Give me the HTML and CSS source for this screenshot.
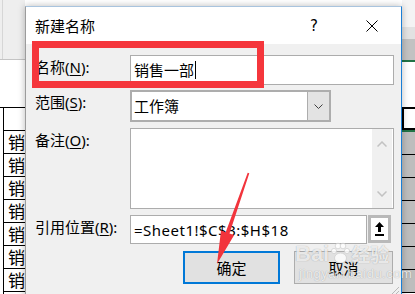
FILE: index.html
```html
<!DOCTYPE html>
<html lang="zh-CN">
<head>
  <meta charset="UTF-8" />
  <meta name="viewport" content="width=device-width, initial-scale=1.0"/>
  <title>新建名称</title>
  <link rel="stylesheet" href="styles.css">
</head>
<body>

  <!-- Sheet behind the dialog -->
  <div class="sheet">
    <div class="sheet-left">
      <div class="ribbon"><div class="ribbon-line"></div></div>
      <div class="blank"></div>
      <div class="cells">
        <div class="cell"></div>
        <div class="cell">销</div>
        <div class="cell">销</div>
        <div class="cell">销</div>
        <div class="cell">销</div>
        <div class="cell">销</div>
        <div class="cell">销</div>
        <div class="cell">销</div>
        <div class="cell">销</div>
      </div>
    </div>
    <div class="sheet-right">
      <div class="shade"></div>
      <div class="head-light"></div>
      <div class="head-dark"></div>
      <div class="green"></div>
      <div class="blank-r"></div>
      <div class="selected"></div>
      <div class="green"></div>
      <div class="gray-cells">
        <div class="gray-cell"></div>
        <div class="gray-cell"></div>
        <div class="gray-cell"></div>
        <div class="gray-cell"></div>
        <div class="gray-cell"></div>
        <div class="gray-cell"></div>
        <div class="gray-cell"></div>
      </div>
    </div>
  </div>

  <!-- Dialog -->
  <div class="dialog">
    <div class="titlebar">
      <span class="title">新建名称</span>
      <span class="help">?</span>
      <svg class="close" width="12" height="12" viewBox="0 0 12 12">
        <path d="M0.5 0.5 L11.5 11.5 M11.5 0.5 L0.5 11.5" stroke="#000" stroke-width="1" fill="none"/>
      </svg>
    </div>

    <div class="body">
      <div class="field">
        <label>名称(<u>N</u>):</label>
        <div class="input name-input">销售一部<span class="caret"></span></div>
      </div>

      <div class="field scope">
        <label>范围(<u>S</u>):</label>
        <div class="combo">
          <div class="combo-text">工作簿</div>
          <div class="combo-btn">
            <svg width="9" height="5" viewBox="0 0 9 5">
              <path d="M0.5 0.5 L4.5 4.5 L8.5 0.5" stroke="#404040" stroke-width="1" fill="none"/>
            </svg>
          </div>
        </div>
      </div>

      <div class="field comment">
        <label>备注(<u>O</u>):</label>
        <div class="textarea">
          <div class="scrollbar">
            <svg width="10" height="6" viewBox="0 0 10 6">
              <path d="M0.5 5.5 L5 1 L9.5 5.5" stroke="#c2c2c2" stroke-width="1.5" fill="none"/>
            </svg>
            <svg width="10" height="6" viewBox="0 0 10 6">
              <path d="M0.5 0.5 L5 5 L9.5 0.5" stroke="#c2c2c2" stroke-width="1.5" fill="none"/>
            </svg>
          </div>
        </div>
      </div>

      <div class="field ref">
        <label>引用位置(<u>R</u>):</label>
        <div class="ref-box">
          <div class="input ref-input">=Sheet1!$C$3:$H$18</div>
          <div class="collapse-btn">
            <svg width="9" height="14" viewBox="0 0 9 14">
              <path d="M4.5 0 L9 5 L6 5 L6 10 L3 10 L3 5 L0 5 Z" fill="#000"/>
              <rect x="0" y="12" width="9" height="2" fill="#000"/>
            </svg>
          </div>
        </div>
      </div>

      <div class="actions">
        <button class="btn primary">确定</button>
        <button class="btn">取消</button>
      </div>
    </div>

    <div class="grip"></div>
  </div>

  <!-- Annotations on top of the screenshot -->
  <div class="highlight"></div>
  <svg class="arrow" width="415" height="294" viewBox="0 0 415 294">
    <polygon points="217,264 221,230.5 225.7,232.2 247.7,172.7 249.3,173.3 229.5,233.4 234.2,235" fill="#f2343c"/>
  </svg>

  <div class="watermark">
    <div class="wm-top">
      <span class="wm-bai">Bai</span>
      <svg class="wm-paw" width="20" height="24" viewBox="0 0 20 24">
        <circle cx="4" cy="9" r="2.6" fill="#fff" stroke="#ccc" stroke-width="0.8"/>
        <circle cx="8" cy="4" r="2.8" fill="#fff" stroke="#ccc" stroke-width="0.8"/>
        <circle cx="13" cy="4" r="2.8" fill="#fff" stroke="#ccc" stroke-width="0.8"/>
        <circle cx="17" cy="9" r="2.6" fill="#fff" stroke="#ccc" stroke-width="0.8"/>
        <ellipse cx="10.5" cy="16" rx="6" ry="5" fill="#fff" stroke="#ccc" stroke-width="0.8"/>
      </svg>
      <span class="wm-du">经验</span>
    </div>
    <div class="wm-url">jingyan.baidu.com</div>
  </div>

</body>
</html>
```

FILE: styles.css
```css
body {
  margin: 0;
  width: 415px;
  height: 294px;
  overflow: hidden;
  position: relative;
  background: #fff;
  font-family: "Noto Sans", "Noto Sans CJK SC", sans-serif;
  font-size: 15px;
  color: #000;
}

/* ---------- sheet behind ---------- */

.sheet {
  display: flex;
  justify-content: space-between;
  height: 294px;
}

.sheet-left {
  width: 25px;
}

.ribbon {
  height: 60px;
  background: #eeeeee;
  border-bottom: 1px solid #c4c4c4;
  box-sizing: border-box;
}

.ribbon-line {
  height: 100%;
  margin-left: 2px;
  border-left: 1px solid #d6d6d6;
}

.blank {
  height: 47px;
}

.cells {
  border-top: 1px solid #000;
}

.cell {
  height: 22px;
  margin-left: 3px;
  padding-left: 4px;
  border-left: 1px solid #000;
  border-bottom: 1px solid #000;
  font-family: "Noto Sans CJK SC", sans-serif;
  font-size: 17px;
  line-height: 22px;
  white-space: nowrap;
  overflow: hidden;
}

.sheet-right {
  width: 13px;
}

.shade {
  height: 27px;
  background: #f4f4f4;
}

.head-light {
  height: 12px;
  background: #e2e2e2;
}

.head-dark {
  height: 21px;
  background: #c2c2c2;
}

.green {
  height: 2px;
  background: #217346;
}

.blank-r {
  height: 45px;
}

.selected {
  height: 19px;
  border: 2px solid #000;
  border-right: none;
}

.gray-cells {
  background: #bdbdbd;
}

.gray-cell {
  height: 22px;
  border-bottom: 1px solid #000;
}

/* ---------- dialog ---------- */

.dialog {
  position: absolute;
  left: 25px;
  top: 6px;
  width: 377px;
  height: 300px;
  box-sizing: border-box;
  border: 1px solid #9c9c9c;
  border-top-color: #a9c4de;
  border-right-color: #1a7fd6;
  background: #f0f0f0;
  box-shadow: 0 0 7px rgba(0, 0, 0, 0.28);
}

.titlebar {
  height: 37px;
  background: #fff;
  display: flex;
  align-items: center;
  padding-left: 9px;
}

.title {
  flex: 1;
  font-family: "Noto Sans CJK SC", sans-serif;
  line-height: 20px;
}

.help {
  font-family: "DejaVu Sans", sans-serif;
  font-size: 15px;
  width: 12px;
  margin-right: 46px;
  text-align: center;
}

.close {
  margin-right: 23px;
}

.body {
  padding: 11px 7px 0 9px;
}

.field {
  display: flex;
  align-items: flex-start;
  margin-bottom: 5px;
}

.field label {
  width: 95px;
  flex: none;
  line-height: 24px;
  white-space: nowrap;
}

.field u {
  text-decoration-thickness: 1px;
  text-underline-offset: 2px;
}

.input {
  flex: 1;
  height: 30px;
  box-sizing: border-box;
  border: 1px solid #acacac;
  background: #fff;
  padding-left: 3px;
  line-height: 28px;
  white-space: nowrap;
  overflow: hidden;
}

.name-input {
  display: flex;
  align-items: center;
}

.caret {
  display: inline-block;
  width: 1px;
  height: 18px;
  background: #000;
  margin-left: 1px;
}

.scope {
  margin-bottom: 6px;
}

.combo {
  width: 201px;
  height: 32px;
  box-sizing: border-box;
  border: 2px solid #adadad;
  background: #fff;
  display: flex;
}

.combo-text {
  flex: 1;
  padding-left: 2px;
  line-height: 28px;
}

.combo-btn {
  width: 21px;
  background: #e3e3e3;
  border-left: 1px solid #adadad;
  display: flex;
  align-items: center;
  justify-content: center;
}

.comment {
  margin-bottom: 6px;
}

.textarea {
  flex: 1;
  height: 81px;
  box-sizing: border-box;
  border: 1px solid #acacac;
  background: #fff;
  display: flex;
  justify-content: flex-end;
  padding-right: 1px;
}

.scrollbar {
  width: 20px;
  background: #f0f0f0;
  display: flex;
  flex-direction: column;
  justify-content: space-between;
  align-items: center;
  padding: 12px 0 11px;
}

.ref {
  margin-bottom: 7px;
}

.ref-box {
  flex: 1;
  display: flex;
  gap: 1px;
  padding-right: 3px;
}

.ref-input {
  height: 29px;
  letter-spacing: 0.5px;
}

.collapse-btn {
  width: 23px;
  height: 28px;
  box-sizing: border-box;
  border: 3px solid #b9b9b9;
  background: #fff;
  display: flex;
  align-items: center;
  justify-content: center;
}

.actions {
  display: flex;
  justify-content: flex-end;
  gap: 14px;
  padding-right: 1px;
}

.btn {
  height: 33px;
  width: 99px;
  box-sizing: border-box;
  border: 1px solid #adadad;
  background: #e1e1e1;
  font-family: "Noto Sans CJK SC", sans-serif;
  font-size: 15px;
  color: #000;
  padding: 0;
}

.btn.primary {
  width: 97px;
  border: 2px solid #0078d7;
}

.grip {
  position: absolute;
  right: 2px;
  bottom: 8px;
  width: 11px;
  height: 11px;
  background: repeating-linear-gradient(135deg, transparent 0 2px, #b8b8b8 2px 3px);
  clip-path: polygon(100% 0, 100% 100%, 0 100%);
}

/* ---------- annotations ---------- */

.highlight {
  position: absolute;
  left: 32px;
  top: 41px;
  width: 232px;
  height: 47px;
  box-sizing: border-box;
  border: 7px solid #f5363c;
}

.arrow {
  position: absolute;
  left: 0;
  top: 0;
}

.watermark {
  position: absolute;
  left: 295px;
  top: 238px;
  width: 95px;
  color: rgba(255, 255, 255, 0.8);
  text-shadow: 0 0 1px rgba(0, 0, 0, 0.35);
  font-family: "Liberation Sans", sans-serif;
  font-weight: bold;
}

.wm-top {
  display: flex;
  align-items: flex-end;
  height: 28px;
}

.wm-bai {
  font-size: 22px;
  line-height: 24px;
}

.wm-paw {
  opacity: 0.8;
  margin: 0 1px;
}

.wm-du {
  font-family: "Noto Sans CJK SC", sans-serif;
  font-size: 19px;
  line-height: 24px;
}

.wm-url {
  font-size: 13px;
  font-weight: normal;
  line-height: 16px;
  letter-spacing: 0.5px;
  margin-left: 4px;
}
```
